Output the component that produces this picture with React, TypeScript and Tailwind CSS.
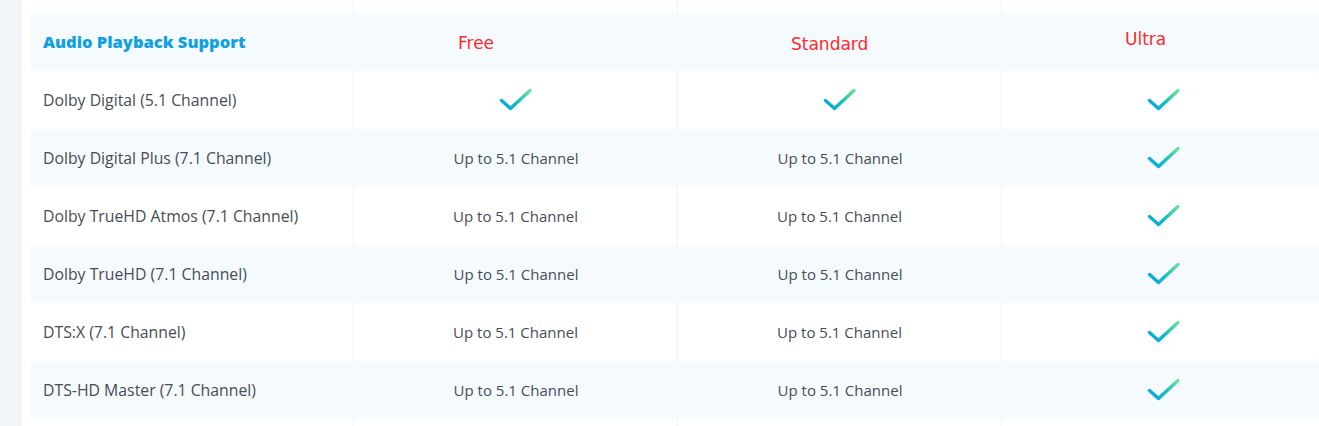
import React from "react";

type Cell = "check" | "upto";

const rows: { label: string; cells: Cell[] }[] = [
  { label: "Dolby Digital (5.1 Channel)", cells: ["check", "check", "check"] },
  { label: "Dolby Digital Plus (7.1 Channel)", cells: ["upto", "upto", "check"] },
  { label: "Dolby TrueHD Atmos (7.1 Channel)", cells: ["upto", "upto", "check"] },
  { label: "Dolby TrueHD (7.1 Channel)", cells: ["upto", "upto", "check"] },
  { label: "DTS:X (7.1 Channel)", cells: ["upto", "upto", "check"] },
  { label: "DTS-HD Master (7.1 Channel)", cells: ["upto", "upto", "check"] },
];

const Check = () => (
  <svg width="34" height="24" viewBox="0 0 34 24" fill="none">
    <defs>
      <linearGradient id="chk" x1="0" y1="24" x2="34" y2="0" gradientUnits="userSpaceOnUse">
        <stop offset="0" stopColor="#0a9fe0" />
        <stop offset="0.45" stopColor="#0cbcc8" />
        <stop offset="1" stopColor="#7fe88a" />
      </linearGradient>
    </defs>
    <path
      d="M2.5 12.5 L11.5 20.5 L31 2.5"
      stroke="url(#chk)"
      strokeWidth="3.4"
      strokeLinecap="round"
      strokeLinejoin="round"
    />
  </svg>
);

const cols = "grid grid-cols-[323px_324px_324px_324px]";

const App = () => {
  return (
    <div
      className="flex h-[426px] w-[1319px] overflow-hidden bg-white"
      style={{ fontFamily: "'Open Sans', sans-serif" }}
    >
      <div className="w-[22px] shrink-0 bg-[#f3f6f8]" />
      <div className="shrink-0 pl-[9px]">
        <div className={`${cols} h-[13px]`}>
          <div className="border-r border-[#f0f2f4]" />
          <div className="border-r border-[#f0f2f4]" />
          <div className="border-r border-[#f0f2f4]" />
          <div />
        </div>
        <div className={`${cols} h-[58px] bg-[#f5faff] text-[#ff2a2a]`}>
          <div className="flex items-center pl-[12px] pt-[1px] text-[16.5px] font-extrabold text-[#10a0e4]">
            Audio Playback Support
          </div>
          <div
            className="flex items-center pl-[104px] pt-[3px] text-[17px]"
            style={{ fontFamily: "'DejaVu Sans', sans-serif" }}
          >
            Free
          </div>
          <div
            className="flex items-center pl-[113px] pt-[5px] text-[17px]"
            style={{ fontFamily: "'DejaVu Sans', sans-serif" }}
          >
            Standard
          </div>
          <div
            className="flex items-center pb-[5px] pl-[123px] text-[17px]"
            style={{ fontFamily: "'DejaVu Sans', sans-serif" }}
          >
            Ultra
          </div>
        </div>
        {rows.map((row, i) => {
          const tinted = i % 2 === 1;
          const line = tinted ? "" : "border-r border-[#f0f2f4]";
          return (
            <div
              key={row.label}
              className={`${cols} h-[58px] text-[15px] text-[#474d57] ${tinted ? "bg-[#f5faff]" : ""}`}
            >
              <div className={`flex items-center pl-[12px] pt-[2px] text-[15.8px] ${line}`}>
                {row.label}
              </div>
              {row.cells.map((c, j) => (
                <div
                  key={j}
                  className={`flex items-center justify-center ${j < 2 ? line : ""}`}
                >
                  {c === "check" ? <Check /> : "Up to 5.1 Channel"}
                </div>
              ))}
            </div>
          );
        })}
        <div className={`${cols} h-[20px]`}>
          <div className="border-r border-[#f0f2f4]" />
          <div className="border-r border-[#f0f2f4]" />
          <div className="border-r border-[#f0f2f4]" />
          <div />
        </div>
      </div>
    </div>
  );
};

export default App;
